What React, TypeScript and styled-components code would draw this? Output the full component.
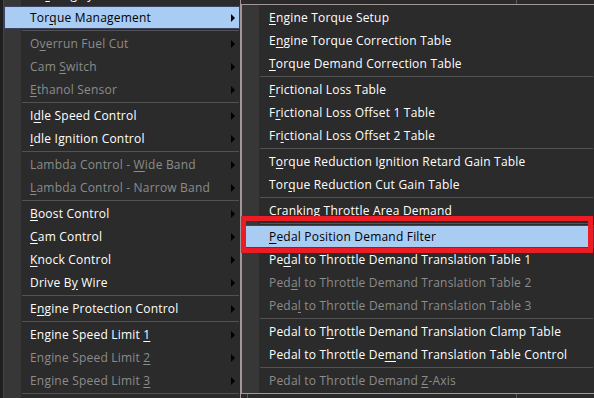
import React from 'react';
import styled, { createGlobalStyle } from 'styled-components';

const GlobalStyle = createGlobalStyle`
  html, body {
    margin: 0;
    padding: 0;
    background: #262626;
  }
`;

const Screen = styled.div`
  position: relative;
  display: flex;
  width: 594px;
  height: 398px;
  overflow: hidden;
  background: #262626;
  font-family: 'Segoe UI', 'Open Sans', 'Noto Sans', sans-serif;
  font-size: 12px;
  letter-spacing: 0.2px;
`;

const EdgeStrip = styled.div`
  width: 3px;
  flex-shrink: 0;
  background: #1f1f1f;
`;

const MenuPanel = styled.div<{ $sub?: boolean }>`
  display: flex;
  flex-direction: column;
  box-sizing: border-box;
  flex-shrink: 0;
  background: linear-gradient(to right, #373737 17px, #2b2b2b 17px);
  ${({ $sub }) =>
    $sub
      ? `
    flex: 1;
    padding: 1px 0;
    border: 1px solid #a3979a;
    border-right: none;
  `
      : `
    width: 238px;
    margin-top: -17px;
    align-self: flex-start;
    border-left: 1px solid #454545;
    border-right: 1px solid #a3979a;
  `}
`;

const SideColumn = styled.div`
  flex: 1;
  display: flex;
  flex-direction: column;
  min-width: 0;
`;

const TableStrip = styled.div`
  display: flex;
  height: 4px;
  flex-shrink: 0;
  overflow: hidden;
  background: #2a2a2a;
  color: #d8d8d8;
`;

const TableCell = styled.div<{ $width: number }>`
  width: ${({ $width }) => $width}px;
  flex-shrink: 0;
  border-right: 1px solid #5c5c5c;
  box-sizing: border-box;
`;

const CellText = styled.div<{ $pad: number }>`
  margin-top: -13px;
  padding-left: ${({ $pad }) => $pad}px;
  line-height: 16px;
  white-space: nowrap;
`;

const Row = styled.div<{ $active?: boolean; $disabled?: boolean; $inset: number; $indent: number }>`
  display: flex;
  align-items: center;
  height: 23px;
  box-sizing: border-box;
  flex-shrink: 0;
  margin-left: ${({ $inset }) => $inset}px;
  padding-left: ${({ $indent }) => $indent}px;
  padding-right: 4px;
  border: 1px solid ${({ $active }) => ($active ? '#3f4363' : 'transparent')};
  background: ${({ $active }) => ($active ? '#a9cdf2' : 'transparent')};
  color: ${({ $active, $disabled }) => ($active ? '#000000' : $disabled ? '#8c8c8c' : '#ffffff')};
  white-space: nowrap;
`;

const Label = styled.span`
  flex: 1;
  line-height: 16px;
`;

const AccessKey = styled.span`
  text-decoration: underline;
  text-underline-offset: 2px;
`;

const SubArrow = styled.span`
  width: 0;
  height: 0;
  border-left: 4px solid #000000;
  border-top: 4px solid transparent;
  border-bottom: 4px solid transparent;
`;

const Separator = styled.div`
  height: 3px;
  flex-shrink: 0;
  display: flex;
  align-items: center;
  margin: 0 1px 0 18px;

  &::after {
    content: '';
    flex: 1;
    height: 1px;
    background: #525252;
  }
`;

const Callout = styled.div`
  position: absolute;
  left: 241px;
  top: 216px;
  width: 352px;
  height: 37px;
  box-sizing: border-box;
  border: 5px solid #ec1c24;
  pointer-events: none;
`;

type Item = { label?: string; sep?: boolean; disabled?: boolean; active?: boolean };

const mainItems: Item[] = [
  { label: 'An&ti-Lag System' },
  { label: 'Tor&que Management', active: true },
  { sep: true },
  { label: 'O&verrun Fuel Cut', disabled: true },
  { label: 'Cam &Switch', disabled: true },
  { label: '&Ethanol Sensor', disabled: true },
  { sep: true },
  { label: 'I&dle Speed Control' },
  { label: '&Idle Ignition Control' },
  { sep: true },
  { label: 'Lambda Control - &Wide Band', disabled: true },
  { label: '&Lambda Control - Narrow Band', disabled: true },
  { sep: true },
  { label: '&Boost Control' },
  { label: '&Cam Control' },
  { label: '&Knock Control' },
  { label: 'Drive B&y Wire' },
  { sep: true },
  { label: 'E&ngine Protection Control' },
  { sep: true },
  { label: 'Engine Speed Limit &1' },
  { label: 'Engine Speed Limit &2', disabled: true },
  { label: 'Engine Speed Limit &3', disabled: true },
  { sep: true },
  { label: '&Fuel Pressure Control' },
];

const torqueItems: Item[] = [
  { label: '&Engine Torque Setup' },
  { label: 'E&ngine Torque Correction Table' },
  { label: '&Torque Demand Correction Table' },
  { sep: true },
  { label: '&Frictional Loss Table' },
  { label: 'F&rictional Loss Offset 1 Table' },
  { label: 'Fr&ictional Loss Offset 2 Table' },
  { sep: true },
  { label: 'T&orque Reduction Ignition Retard Gain Table' },
  { label: 'Tor&que Reduction Cut Gain Table' },
  { sep: true },
  { label: 'Cranking Throttle Area Demand' },
  { sep: true },
  { label: '&Pedal Position Demand Filter', active: true },
  { label: 'Pe&dal to Throttle Demand Translation Table 1' },
  { label: 'Ped&al to Throttle Demand Translation Table 2', disabled: true },
  { label: 'Peda&l to Throttle Demand Translation Table 3', disabled: true },
  { sep: true },
  { label: 'Pedal to T&hrottle Demand Translation Clamp Table' },
  { label: 'Pedal to Throttle De&mand Translation Table Control' },
  { sep: true },
  { label: 'Pedal to Throttle Demand &Z-Axis', disabled: true },
];

const MenuText: React.FC<{ text: string }> = ({ text }) => {
  const i = text.indexOf('&');
  if (i < 0) return <>{text}</>;
  return (
    <>
      {text.slice(0, i)}
      <AccessKey>{text[i + 1]}</AccessKey>
      {text.slice(i + 2)}
    </>
  );
};

const MenuList: React.FC<{ items: Item[]; inset: number; indent: number; arrows?: boolean }> = ({
  items,
  inset,
  indent,
  arrows,
}) => (
  <>
    {items.map((item, index) =>
      item.sep ? (
        <Separator key={index} />
      ) : (
        <Row
          key={index}
          $active={item.active}
          $disabled={item.disabled}
          $inset={inset}
          $indent={indent}
        >
          <Label>
            <MenuText text={item.label || ''} />
          </Label>
          {arrows && <SubArrow />}
        </Row>
      )
    )}
  </>
);

export default function App() {
  return (
    <Screen>
      <GlobalStyle />
      <EdgeStrip />
      <MenuPanel>
        <MenuList items={mainItems} inset={0} indent={25} arrows />
      </MenuPanel>
      <SideColumn>
        <TableStrip>
          <TableCell $width={276}>
            <CellText $pad={132}>20.0 %</CellText>
          </TableCell>
        </TableStrip>
        <MenuPanel $sub>
          <MenuList items={torqueItems} inset={2} indent={24} />
        </MenuPanel>
        <TableStrip>
          <TableCell $width={7} />
          <TableCell $width={269} />
        </TableStrip>
      </SideColumn>
      <Callout />
    </Screen>
  );
}
